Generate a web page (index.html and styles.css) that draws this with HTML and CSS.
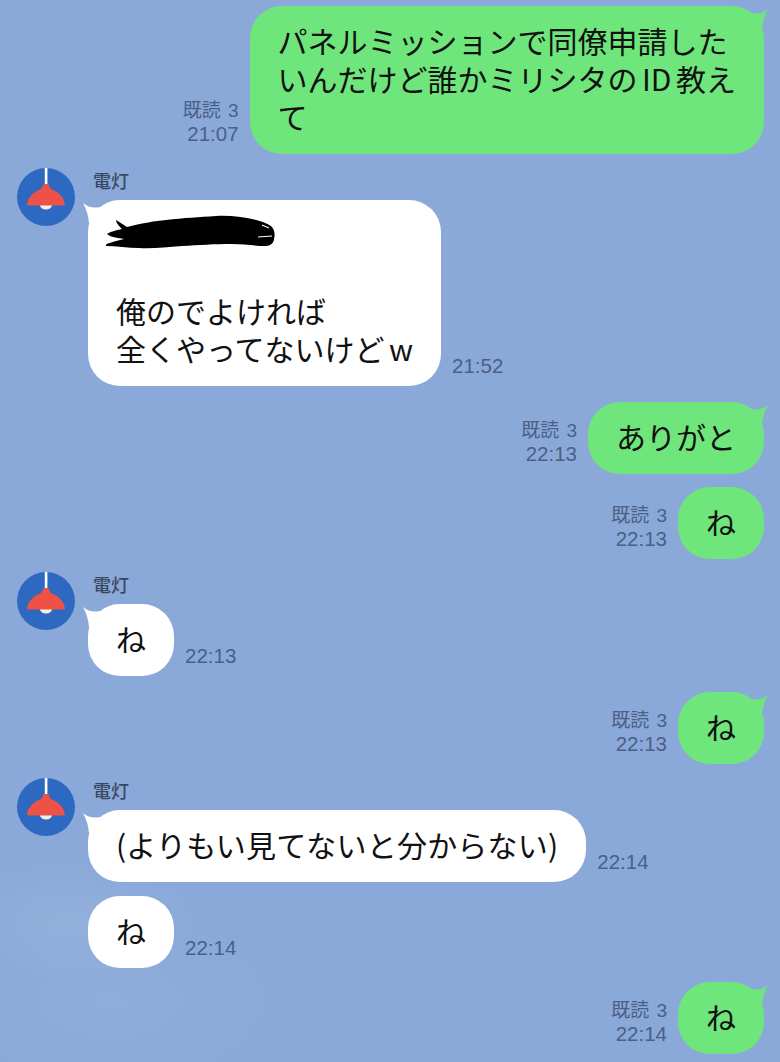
FILE: index.html
```html
<!DOCTYPE html>
<html lang="ja">
<head>
    <meta charset="UTF-8">
    <meta name="viewport" content="width=device-width, initial-scale=1.0">
    <title>トーク</title>
    <link rel="stylesheet" href="styles.css">
</head>
<body>
    <svg class="defs" width="0" height="0">
        <symbol id="lamp" viewBox="0 0 58 58">
            <circle cx="29" cy="29" r="29" fill="#2e69c1"/>
            <rect x="27.8" y="0" width="2.6" height="17" fill="#fff"/>
            <path d="M23 37 a6 4.5 0 0 0 12 0z" fill="#f6efe6"/>
            <path d="M10 36.5 C11 29 17 24 23 21.5 C25 20.5 26 18 26.5 16 L31.5 16 C32 18 33 20.5 35 21.5 C41 24 47 29 48 36.5 Q48 37.5 46 37.5 L12 37.5 Q10 37.5 10 36.5z" fill="#ee5146"/>
        </symbol>
    </svg>

    <main class="chat">
        <div class="row out">
            <div class="meta"><span class="read">既読 3</span><span>21:07</span></div>
            <div class="bubble green tail">パネルミッションで同僚申請した<br>いんだけど誰かミリシタの<span class="latin">ID</span>教え<br>て</div>
        </div>

        <div class="row in">
            <svg class="avatar"><use href="#lamp"/></svg>
            <div class="body">
                <div class="name">電灯</div>
                <div class="line">
                    <div class="bubble white tail">
                        <svg class="scribble" width="180" height="38" viewBox="0 0 180 38">
                            <path d="M12 5 L23 12 C40 8 50 6 62 5 C80 3 95 2 112 1 C125 0 138 2 148 4 C158 6 165 9 168 12 C171 16 171 20 170 24 C170 28 166 31 162 31 C150 31 140 29 128 29 C110 29 95 30 78 31 C62 32 48 34 35 33 C24 33 12 31 2 31 C1 29 4 28 20 24 C14 23 6 22 3 19 C6 17 12 15 18 14 C15 11 12 8 12 5z" fill="#000"/>
                            <path d="M158 10 L165 13 M154 22 L168 21" stroke="#fff" stroke-width="1.2" fill="none"/>
                        </svg>
                        <div class="blank"></div>
                        俺のでよければ<br>全くやってないけど<span class="latin last">w</span>
                    </div>
                    <div class="time">21:52</div>
                </div>
            </div>
        </div>

        <div class="row out wide">
            <div class="meta"><span class="read">既読 3</span><span>22:13</span></div>
            <div class="bubble green tail">ありがと</div>
        </div>

        <div class="row out tight">
            <div class="meta"><span class="read">既読 3</span><span>22:13</span></div>
            <div class="bubble green">ね</div>
        </div>

        <div class="row in tight">
            <svg class="avatar"><use href="#lamp"/></svg>
            <div class="body">
                <div class="name">電灯</div>
                <div class="line">
                    <div class="bubble white tail">ね</div>
                    <div class="time">22:13</div>
                </div>
            </div>
        </div>

        <div class="row out wide">
            <div class="meta"><span class="read">既読 3</span><span>22:13</span></div>
            <div class="bubble green tail">ね</div>
        </div>

        <div class="row in">
            <svg class="avatar"><use href="#lamp"/></svg>
            <div class="body">
                <div class="name">電灯</div>
                <div class="line">
                    <div class="bubble white tail loose">(よりもい見てないと分からない)</div>
                    <div class="time">22:14</div>
                </div>
            </div>
        </div>

        <div class="row in cont">
            <div class="line">
                <div class="bubble white">ね</div>
                <div class="time">22:14</div>
            </div>
        </div>

        <div class="row out">
            <div class="meta"><span class="read">既読 3</span><span>22:14</span></div>
            <div class="bubble green tail">ね</div>
        </div>
    </main>
</body>
</html>
```

FILE: styles.css
```css
body {
    margin: 0;
    height: 1062px;
    overflow: hidden;
    font-family: "Noto Sans CJK JP", sans-serif;
    color: #111;
    background-color: #8aa9d9;
    background-image:
        radial-gradient(ellipse 130px 60px at 70px 920px, rgba(255, 255, 255, 0.08), transparent),
        radial-gradient(ellipse 170px 90px at 110px 1000px, rgba(255, 255, 255, 0.05), transparent);
}

.defs {
    display: block;
    height: 0;
}

.chat {
    display: flex;
    flex-direction: column;
    gap: 14px;
    padding-top: 6px;
}

.row {
    display: flex;
}

.row.out {
    justify-content: flex-end;
    align-items: flex-end;
    gap: 11px;
    padding-right: 16px;
}

.row.wide {
    margin-top: 2px;
}

.row.tight {
    margin-top: -1px;
}

.row.in {
    padding-left: 17px;
    gap: 13px;
}

.row.cont {
    padding-left: 88px;
}

.avatar {
    width: 58px;
    height: 58px;
    flex-shrink: 0;
}

.name {
    height: 32px;
    padding-left: 5px;
    font-size: 18px;
    font-weight: 500;
    line-height: 25px;
    color: #3a4763;
}

.line {
    display: flex;
    align-items: flex-end;
    gap: 11px;
}

.bubble {
    position: relative;
    padding: 15px 28px 19px;
    border-radius: 32px;
    font-size: 30px;
    line-height: 38px;
    white-space: nowrap;
}

.green {
    background-color: #6ee67c;
}

.white {
    background-color: #fff;
}

.loose {
    letter-spacing: 0.2px;
}

.latin {
    margin: 0 4.5px;
}

.latin.last {
    margin-right: 0;
}

.tail::before {
    content: "";
    position: absolute;
    top: 3px;
    width: 18px;
    height: 20px;
    background-color: inherit;
    clip-path: path("M1 0 Q8 6 18 4 L18 20 L7 20 Q6 9 1 0z");
}

.white.tail::before {
    left: -6px;
}

.green.tail::before {
    right: -5px;
    transform: scaleX(-1);
}

.scribble {
    display: block;
    margin-left: -12px;
    height: 38px;
}

.blank {
    height: 38px;
}

.meta {
    display: flex;
    flex-direction: column;
    align-items: flex-end;
    padding-bottom: 9px;
    font-family: "Liberation Sans", "Noto Sans CJK JP", sans-serif;
    font-size: 20.5px;
    line-height: 23px;
    color: #4c5f85;
}

.read {
    font-size: 19px;
    word-spacing: 2px;
}

.time {
    padding-bottom: 9px;
    font-family: "Liberation Sans", sans-serif;
    font-size: 20.5px;
    line-height: 23px;
    color: #4c5f85;
}
```
